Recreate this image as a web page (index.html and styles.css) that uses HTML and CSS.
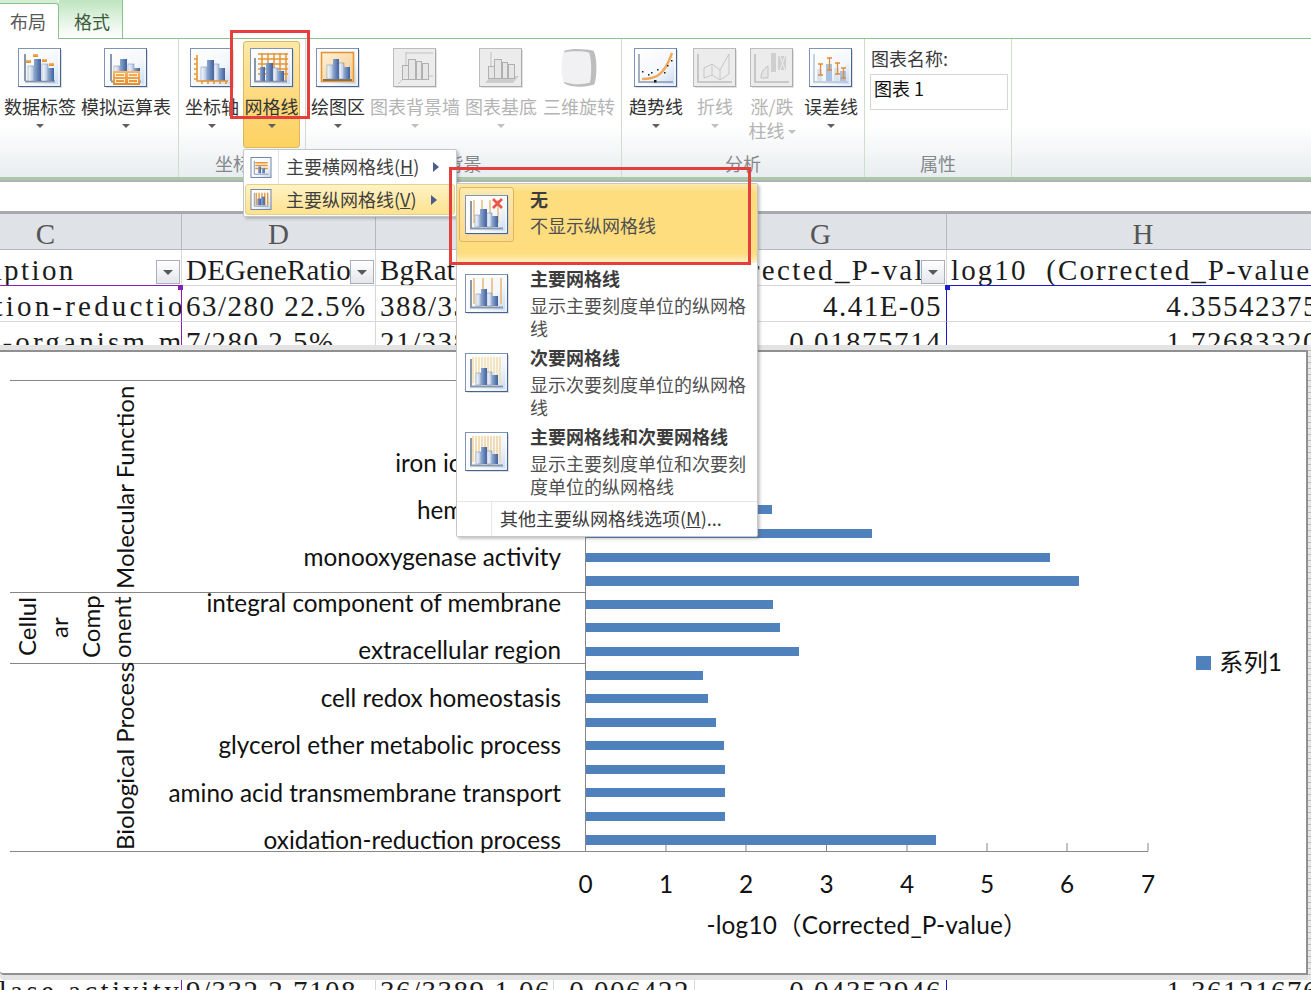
FILE: index.html
```html
<!DOCTYPE html>
<html lang="zh-CN">
<head>
<meta charset="utf-8">
<title>图表工具 布局</title>
<link rel="stylesheet" href="styles.css">
</head>
<body>
<svg class="defs" width="0" height="0" aria-hidden="true">
  <defs>
    <linearGradient id="fr" x1="0" y1="0" x2="1" y2="1"><stop offset="0" stop-color="#ffffff"/><stop offset=".6" stop-color="#f4f7fb"/><stop offset="1" stop-color="#c4d8f2"/></linearGradient>
    <linearGradient id="bd" x1="0" y1="0" x2="1" y2="0"><stop offset="0" stop-color="#8fa8cf"/><stop offset="1" stop-color="#3f5f9c"/></linearGradient>
    <linearGradient id="bl" x1="0" y1="0" x2="1" y2="0"><stop offset="0" stop-color="#ffffff"/><stop offset="1" stop-color="#a9bedd"/></linearGradient>
    <linearGradient id="og" x1="0" y1="0" x2="0" y2="1"><stop offset="0" stop-color="#f7b968"/><stop offset="1" stop-color="#e48a2a"/></linearGradient>
    <linearGradient id="pl" x1="0" y1="0" x2="1" y2="1"><stop offset="0" stop-color="#fff3dc"/><stop offset="1" stop-color="#f6c98a"/></linearGradient>
    <symbol id="frame" viewBox="0 0 44 40">
      <rect x="2" y="2" width="42" height="38" fill="#c9c9c9" opacity=".6"/>
      <rect x=".5" y=".5" width="42" height="38" fill="url(#fr)" stroke="#7f95b5"/>
      <path d="M42.5 .5V38.5H.5" fill="none" stroke="#46648f"/>
      <rect x="2" y="2" width="39" height="35" fill="none" stroke="#fff"/>
    </symbol>
    <symbol id="bars" viewBox="0 0 44 40">
      <path d="M7 33V6M7 33.500H37" stroke="#8a97aa" stroke-width="2" fill="none"/>
      <rect x="10" y="18" width="6" height="15" fill="url(#bl)" stroke="#6f86ad" stroke-width=".5"/>
      <rect x="16" y="11" width="7" height="22" fill="url(#bd)"/>
      <rect x="24" y="16" width="6" height="17" fill="url(#bl)" stroke="#6f86ad" stroke-width=".5"/>
      <rect x="30" y="20" width="6" height="13" fill="url(#bd)"/>
    </symbol>
    <symbol id="i-labels" viewBox="0 0 44 40">
      <use href="#frame" width="44" height="40"/><use href="#bars" width="44" height="40"/>
      <g fill="url(#og)"><rect x="8" y="12" width="5" height="3"/><rect x="15" y="6" width="5" height="3"/><rect x="24" y="11" width="5" height="3"/><rect x="31" y="15" width="5" height="3"/></g>
    </symbol>
    <symbol id="i-table" viewBox="0 0 44 40">
      <use href="#frame" width="44" height="40"/><use href="#bars" width="44" height="40"/>
      <rect x="9" y="23" width="27" height="14" fill="url(#og)"/>
      <g fill="none" stroke="#fff2dc"><rect x="11.500" y="25.500" width="9" height="3"/><rect x="24.500" y="25.500" width="9" height="3"/><rect x="11.500" y="31.500" width="9" height="3"/><rect x="24.500" y="31.500" width="9" height="3"/></g>
    </symbol>
    <symbol id="i-axis" viewBox="0 0 44 40">
      <use href="#frame" width="44" height="40"/>
      <rect x="11" y="19" width="6" height="14" fill="url(#bl)" stroke="#6f86ad" stroke-width=".5"/><rect x="17" y="12" width="7" height="21" fill="url(#bd)"/><rect x="24" y="16" width="5" height="17" fill="url(#bl)" stroke="#6f86ad" stroke-width=".5"/><rect x="29" y="20" width="6" height="13" fill="url(#bd)"/>
      <path d="M7 7V33H38M4 11H7M4 16H7M4 21H7M4 26H7M4 31H7M12 33V36M18 33V36M24 33V36M30 33V36M36 33V36" stroke="#e8952f" stroke-width="1.600" fill="none"/>
    </symbol>
    <symbol id="i-grid" viewBox="0 0 44 40">
      <use href="#frame" width="44" height="40"/>
      <path d="M8 6H38M8 11H38M8 16H38M8 21H38M8 26H38M12 5V33M18 5V33M24 5V33M30 5V33M36 5V33" stroke="#e8952f" stroke-width="1.500" fill="none"/>
      <path d="M5 10V33.500H37" stroke="#8a97aa" stroke-width="2" fill="none"/>
      <rect x="10" y="19" width="5" height="14" fill="url(#bd)"/><rect x="16" y="15" width="7" height="18" fill="url(#bd)"/><rect x="23" y="20" width="5" height="13" fill="url(#bl)" stroke="#6f86ad" stroke-width=".5"/><rect x="28" y="23" width="6" height="10" fill="url(#bd)"/>
    </symbol>
    <symbol id="i-plot" viewBox="0 0 44 40">
      <use href="#frame" width="44" height="40"/>
      <rect x="5.500" y="4.500" width="32" height="29" fill="url(#pl)" stroke="#e8952f" stroke-width="1.600"/>
      <rect x="11" y="17" width="6" height="14" fill="url(#bl)" stroke="#6f86ad" stroke-width=".5"/><rect x="17" y="11" width="6" height="20" fill="url(#bd)"/><rect x="23" y="15" width="5" height="16" fill="url(#bl)" stroke="#6f86ad" stroke-width=".5"/><rect x="28" y="19" width="6" height="12" fill="url(#bd)"/>
      <path d="M7 32H36" stroke="#7b7468" stroke-width="2"/>
    </symbol>
    <symbol id="g-frame" viewBox="0 0 44 40">
      <rect x="2" y="2" width="42" height="38" fill="#d6d6d6" opacity=".7"/>
      <rect x=".5" y=".5" width="42" height="38" fill="#ececed" stroke="#bdbdbd"/>
      <path d="M42.500 .5V38.500H.5" fill="none" stroke="#ababab"/>
    </symbol>
    <symbol id="i-wall" viewBox="0 0 44 40">
      <use href="#g-frame" width="44" height="40"/>
      <path d="M13 4V28L5 36M13 5H40M13 28H40" stroke="#c2c2c2" fill="none"/>
      <g fill="#e6e6e6" stroke="#b0b0b0"><rect x="9.500" y="17.500" width="6" height="14"/><rect x="15.500" y="11.500" width="7" height="20"/><rect x="23.500" y="13.500" width="5" height="18"/><rect x="29.500" y="15.500" width="6" height="16"/></g>
    </symbol>
    <symbol id="i-floor" viewBox="0 0 44 40">
      <use href="#g-frame" width="44" height="40"/>
      <path d="M12 4V28" stroke="#c2c2c2" fill="none"/>
      <path d="M12 28H40L34 35H6Z" fill="#cdcdcd"/>
      <g fill="#e6e6e6" stroke="#b0b0b0"><rect x="9.500" y="18.500" width="6" height="12"/><rect x="15.500" y="11.500" width="7" height="19"/><rect x="23.500" y="14.500" width="5" height="16"/><rect x="29.500" y="16.500" width="6" height="14"/></g>
    </symbol>
    <symbol id="i-rot" viewBox="0 0 44 44">
      <path d="M6 3C14 0 30 1 38 3C42 10 42 30 39 40C30 44 12 43 6 39C3 30 3 12 6 3Z" fill="#bdbdbd"/>
      <path d="M5 5C12 3 26 3 33 5C36 12 36 30 34 38C25 41 12 40 5 37C2 28 2 14 5 5Z" fill="#f1f0f3"/>
    </symbol>
    <symbol id="i-trend" viewBox="0 0 44 40">
      <use href="#frame" width="44" height="40"/>
      <path d="M5 6V34H39" stroke="#8a97aa" stroke-width="1.500" fill="none"/>
      <path d="M8 31C20 31 30 29 38 5" stroke="#f0a85c" stroke-width="2.400" fill="none"/>
      <g fill="#1a1a1a"><rect x="8" y="23" width="1.500" height="1.500"/><rect x="14" y="26" width="1.500" height="1.500"/><rect x="17" y="24" width="1.500" height="1.500"/><rect x="23" y="21" width="1.500" height="1.500"/><rect x="30" y="24" width="1.500" height="1.500"/><rect x="20" y="32" width="2.500" height="2.500"/><rect x="37" y="12" width="1.500" height="1.500"/><rect x="33" y="17" width="1.500" height="1.500"/></g>
    </symbol>
    <symbol id="i-lines" viewBox="0 0 44 40">
      <use href="#g-frame" width="44" height="40"/>
      <path d="M5 6V34H39" stroke="#bcbcbc" stroke-width="1.500" fill="none"/>
      <path d="M11 20L19 16L27 22L36 6M11 30L19 27L27 32L36 26M11 20V30M19 16V27M27 22V32M36 6V26" stroke="#c6c6c6" fill="none"/>
    </symbol>
    <symbol id="i-updown" viewBox="0 0 44 40">
      <use href="#g-frame" width="44" height="40"/>
      <path d="M5 6V34H39" stroke="#bcbcbc" stroke-width="1.500" fill="none"/>
      <path d="M11 30C11 22 16 20 18 18V30Z" fill="#e5e5e5" stroke="#c2c2c2"/>
      <g fill="#cfcfcf"><rect x="21" y="5" width="5" height="19"/><rect x="28" y="8" width="8" height="14"/></g>
      <path d="M30 8L35 22M35 8L30 22" stroke="#f0f0f0"/>
    </symbol>
    <symbol id="i-error" viewBox="0 0 44 40">
      <use href="#frame" width="44" height="40"/>
      <path d="M5 6V34H39" stroke="#b8c4d4" stroke-width="1.500" fill="none"/>
      <rect x="17" y="16" width="6" height="17" fill="#a9c1e0"/><rect x="8" y="21" width="5" height="12" fill="#d9e4f2"/><rect x="25" y="20" width="5" height="13" fill="#d9e4f2"/><rect x="31" y="23" width="6" height="10" fill="#a9c1e0"/>
      <path d="M9 16H14M11.500 16V27M9 27H14M18 10H23M20.500 10V22M18 22H23M26 15H31M28.500 15V26M26 26H31M32 20H37M34.500 20V30M32 30H37" stroke="#e08b35" stroke-width="1.300" fill="none"/>
    </symbol>
    <symbol id="m-none" viewBox="0 0 44 40">
      <use href="#frame" width="44" height="40"/>
      <path d="M9 5V28M17 5V28M25 5V28M33 5V28" stroke="#eab36b" stroke-width="1.300"/>
      <path d="M6 6V33.500H38" stroke="#8a97aa" stroke-width="2" fill="none"/>
      <rect x="10" y="20" width="5" height="12" fill="url(#bl)" stroke="#6f86ad" stroke-width=".5"/><rect x="15" y="14" width="7" height="18" fill="url(#bd)"/><rect x="22" y="18" width="5" height="14" fill="url(#bl)" stroke="#6f86ad" stroke-width=".5"/><rect x="27" y="21" width="6" height="11" fill="url(#bd)"/>
      <path d="M28 4L37 13M37 4L28 13" stroke="#e8574a" stroke-width="2.600"/>
    </symbol>
    <symbol id="m-major" viewBox="0 0 44 40">
      <use href="#frame" width="44" height="40"/>
      <path d="M9 4V30M18 4V30M27 4V30M36 4V30" stroke="#e8b16a" stroke-width="1.400"/>
      <path d="M6 6V33.500H38" stroke="#8a97aa" stroke-width="2" fill="none"/>
      <rect x="11" y="20" width="5" height="12" fill="url(#bl)" stroke="#6f86ad" stroke-width=".5"/><rect x="16" y="15" width="6" height="17" fill="url(#bd)"/><rect x="22" y="19" width="5" height="13" fill="url(#bl)" stroke="#6f86ad" stroke-width=".5"/><rect x="27" y="22" width="6" height="10" fill="url(#bd)"/>
    </symbol>
    <symbol id="m-minor" viewBox="0 0 44 40">
      <use href="#frame" width="44" height="40"/>
      <path d="M8 4V30M11 4V30M14 4V30M17 4V30M20 4V30M23 4V30M26 4V30M29 4V30M32 4V30M35 4V30" stroke="#f3d68f" stroke-width="1.100"/>
      <path d="M6 6V33.500H38" stroke="#8a97aa" stroke-width="2" fill="none"/>
      <rect x="11" y="20" width="5" height="12" fill="url(#bl)" stroke="#6f86ad" stroke-width=".5"/><rect x="16" y="15" width="6" height="17" fill="url(#bd)"/><rect x="22" y="19" width="5" height="13" fill="url(#bl)" stroke="#6f86ad" stroke-width=".5"/><rect x="27" y="22" width="6" height="10" fill="url(#bd)"/>
    </symbol>
    <symbol id="m-both" viewBox="0 0 44 40">
      <use href="#frame" width="44" height="40"/>
      <path d="M8 4V30M11 4V30M14 4V30M17 4V30M20 4V30M23 4V30M26 4V30M29 4V30M32 4V30M35 4V30" stroke="#f0c578" stroke-width="1.100"/>
      <path d="M6 6V33.500H38" stroke="#8a97aa" stroke-width="2" fill="none"/>
      <rect x="11" y="20" width="5" height="12" fill="url(#bl)" stroke="#6f86ad" stroke-width=".5"/><rect x="16" y="15" width="6" height="17" fill="url(#bd)"/><rect x="22" y="19" width="5" height="13" fill="url(#bl)" stroke="#6f86ad" stroke-width=".5"/><rect x="27" y="22" width="6" height="10" fill="url(#bd)"/>
    </symbol>
    <symbol id="s-h" viewBox="0 0 22 22">
      <rect x=".5" y=".5" width="21" height="21" fill="url(#fr)" stroke="#6d83a5"/>
      <path d="M5 6H18M5 9H18M5 12H18" stroke="#e8952f" stroke-width="1.600"/>
      <path d="M4 4V18H19" stroke="#8a97aa" fill="none"/>
      <rect x="8" y="10" width="3" height="7" fill="url(#bd)"/><rect x="12" y="12" width="3" height="5" fill="url(#bd)"/>
    </symbol>
    <symbol id="s-v" viewBox="0 0 22 22">
      <rect x=".5" y=".5" width="21" height="21" fill="url(#fr)" stroke="#6d83a5"/>
      <path d="M6 4V17M9 4V17M12 4V17M15 4V17M18 4V17" stroke="#e8952f" stroke-width="1.400"/>
      <path d="M4 4V18H19" stroke="#8a97aa" fill="none"/>
      <rect x="7" y="10" width="4" height="7" fill="url(#bd)"/><rect x="11" y="8" width="4" height="9" fill="url(#bd)"/>
    </symbol>
  </defs>
</svg>

<div class="app">
  <nav class="tabs">
    <span class="tab tab-on">布局</span>
    <span class="tab">格式</span>
  </nav>

  <section class="ribbon">
    <div class="group g1">
      <div class="btns">
        <div class="btn w74"><svg class="ic"><use href="#i-labels"/></svg><span class="lb">数据标签</span><i class="caret"></i></div>
        <div class="btn w92"><svg class="ic"><use href="#i-table"/></svg><span class="lb">模拟运算表</span><i class="caret"></i></div>
      </div>
      <div class="gt"></div>
    </div>
    <div class="group g2">
      <div class="btns">
        <div class="btn w58"><svg class="ic"><use href="#i-axis"/></svg><span class="lb">坐标轴</span><i class="caret"></i></div>
        <div class="btn w57 hot"><svg class="ic"><use href="#i-grid"/></svg><span class="lb">网格线</span><i class="caret"></i></div>
      </div>
      <div class="gt">坐标轴</div>
    </div>
    <div class="group g3">
      <div class="btns">
        <div class="btn w56"><svg class="ic"><use href="#i-plot"/></svg><span class="lb">绘图区</span><i class="caret"></i></div>
        <div class="btn w94 off"><svg class="ic"><use href="#i-wall"/></svg><span class="lb">图表背景墙</span><i class="caret"></i></div>
        <div class="btn w74 off"><svg class="ic"><use href="#i-floor"/></svg><span class="lb">图表基底</span><i class="caret"></i></div>
        <div class="btn w78 off"><svg class="ic"><use href="#i-rot"/></svg><span class="lb">三维旋转</span></div>
      </div>
      <div class="gt">背景</div>
    </div>
    <div class="group g4">
      <div class="btns">
        <div class="btn w62"><svg class="ic"><use href="#i-trend"/></svg><span class="lb">趋势线</span><i class="caret"></i></div>
        <div class="btn w52 off"><svg class="ic"><use href="#i-lines"/></svg><span class="lb">折线</span><i class="caret"></i></div>
        <div class="btn w58 off"><svg class="ic"><use href="#i-updown"/></svg><span class="lb">涨/跌<br>柱线<i class="caret caret-in"></i></span></div>
        <div class="btn w56"><svg class="ic"><use href="#i-error"/></svg><span class="lb">误差线</span><i class="caret"></i></div>
      </div>
      <div class="gt">分析</div>
    </div>
    <div class="group g5">
      <div class="props">
        <span class="pl">图表名称:</span>
        <span class="pi">图表 1</span>
      </div>
      <div class="gt">属性</div>
    </div>
  </section>

  <div class="fbar"></div>

  <main class="sheet">
    <div class="row head">
      <div class="c">C</div><div class="c">D</div><div class="c">E</div><div class="c">F</div><div class="c">G</div><div class="c">H</div>
    </div>
    <div class="row r0">
      <div class="c t sel-p-b">Description<b class="flt"></b></div>
      <div class="c">DEGeneRatio<b class="flt"></b></div>
      <div class="c">BgRatio<b class="flt"></b></div>
      <div class="c t">Corrected_P-value</div>
      <div class="c t n gh">Corrected_P-val<b class="flt"></b></div>
      <div class="c h sel-b-b">log10&nbsp; (Corrected_P-value)</div>
      <i class="hd hd-p"></i><i class="hd hd-b"></i>
    </div>
    <div class="row">
      <div class="c t3 sel-p-r">oxidation-reduction process</div>
      <div class="c m">63/280 22.5%</div>
      <div class="c m">388/3389 11.4%</div>
      <div class="c m n">0.000044</div>
      <div class="c m n sel-b-r">4.41E-05</div>
      <div class="c m n">4.355423755</div>
    </div>
    <div class="row">
      <div class="c t3 sel-p-r">single-organism metabolic</div>
      <div class="c m">7/280 2.5%</div>
      <div class="c m">21/3389 0.6%</div>
      <div class="c m n">0.018757</div>
      <div class="c m n sel-b-r">0.01875714</div>
      <div class="c m n">1.726833201</div>
    </div>
    <div class="gap"></div>
    <div class="row">
      <div class="c t4 sel-p-r">hydrolase activity</div>
      <div class="c m">9/332 2.7108</div>
      <div class="c m">36/3389 1.06</div>
      <div class="c m n">0.006422</div>
      <div class="c m n sel-b-r">0.04352946</div>
      <div class="c m n">1.361216767</div>
    </div>
  </main>

  <section class="chart">
    <div class="plot">
      <svg class="plot-svg" viewBox="0 352 1306 621" role="img" aria-label="柱状图">
        <g class="rule">
          <path d="M10 380.500H585M10 592.500H585M10 663.500H585M10 851.500H1148M585.500 381V851"/>
          <path d="M666 843V851M746 843V851M826.500 843V851M907 843V851M987 843V851M1067 843V851M1148 843V851"/>
        </g>
        <g class="bar">
          <rect x="586" y="505" width="186" height="9"/>
          <rect x="586" y="529" width="286" height="9"/>
          <rect x="586" y="553" width="464" height="9"/>
          <rect x="586" y="576" width="493" height="10"/>
          <rect x="586" y="600" width="187" height="9"/>
          <rect x="586" y="623" width="194" height="9"/>
          <rect x="586" y="647" width="213" height="9"/>
          <rect x="586" y="671" width="117" height="9"/>
          <rect x="586" y="694" width="122" height="9"/>
          <rect x="586" y="718" width="130" height="9"/>
          <rect x="586" y="741" width="138" height="9"/>
          <rect x="586" y="765" width="139" height="9"/>
          <rect x="586" y="788" width="139" height="9"/>
          <rect x="586" y="812" width="139" height="9"/>
          <rect x="586" y="835" width="350" height="10"/>
        </g>
        <g class="lab">
          <text x="561" y="472">iron ion binding</text>
          <text x="561" y="519">heme binding</text>
          <text x="561" y="566">monooxygenase activity</text>
          <text x="561" y="612">integral component of membrane</text>
          <text x="561" y="659">extracellular region</text>
          <text x="561" y="707">cell redox homeostasis</text>
          <text x="561" y="754">glycerol ether metabolic process</text>
          <text x="561" y="802">amino acid transmembrane transport</text>
          <text x="561" y="849">oxidation-reduction process</text>
        </g>
        <g class="vert">
          <text transform="translate(134 850) rotate(-90)">Biological Process</text>
          <text transform="translate(134 589) rotate(-90)">Molecular Function</text>
          <text transform="translate(36 656) rotate(-90)">Cellul</text>
          <text transform="translate(68 638) rotate(-90)">ar</text>
          <text transform="translate(100 658) rotate(-90)">Comp</text>
          <text transform="translate(131 658) rotate(-90)">onent</text>
        </g>
        <g class="tick">
          <text x="585.500" y="893">0</text><text x="666" y="893">1</text><text x="746" y="893">2</text><text x="826.500" y="893">3</text><text x="907" y="893">4</text><text x="987" y="893">5</text><text x="1067" y="893">6</text><text x="1148" y="893">7</text>
        </g>
        <text class="xt" x="867" y="934">-log10（Corrected_P-value）</text>
        <rect class="leg" x="1196" y="656" width="15" height="14"/>
        <text class="legt" x="1219" y="671">系列1</text>
      </svg>
    </div>
  </section>

  <div class="menu menu1">
    <div class="mi"><svg class="si"><use href="#s-h"/></svg><span class="mt">主要横网格线(<u>H</u>)</span><i class="arr"></i></div>
    <div class="mi mi-on"><svg class="si"><use href="#s-v"/></svg><span class="mt">主要纵网格线(<u>V</u>)</span><i class="arr"></i></div>
  </div>

  <div class="menu menu2">
    <div class="big big-on">
      <div class="bx"><svg class="bi"><use href="#m-none"/></svg></div>
      <div class="tx"><strong>无</strong><span>不显示纵网格线</span></div>
    </div>
    <div class="big">
      <div class="bx"><svg class="bi"><use href="#m-major"/></svg></div>
      <div class="tx"><strong>主要网格线</strong><span>显示主要刻度单位的纵网格线</span></div>
    </div>
    <div class="big">
      <div class="bx"><svg class="bi"><use href="#m-minor"/></svg></div>
      <div class="tx"><strong>次要网格线</strong><span>显示次要刻度单位的纵网格线</span></div>
    </div>
    <div class="big big-last">
      <div class="bx"><svg class="bi"><use href="#m-both"/></svg></div>
      <div class="tx"><strong>主要网格线和次要网格线</strong><span>显示主要刻度单位和次要刻度单位的纵网格线</span></div>
    </div>
    <div class="foot"><i class="gut"></i><span>其他主要纵网格线选项(<u>M</u>)...</span></div>
  </div>

  <div class="mark mark1"></div>
  <div class="mark mark2"></div>
</div>
</body>
</html>
```

FILE: styles.css
```css
* { box-sizing: border-box; }
html, body { margin: 0; padding: 0; }
body {
  width: 1311px;
  height: 990px;
  overflow: hidden;
  background: #fff;
  font-family: "Noto Sans CJK SC", "Noto Sans", sans-serif;
  font-size: 18px;
  color: #3c3c3c;
}
.defs { position: absolute; }
.app { position: relative; width: 1311px; height: 990px; overflow: hidden; }

/* tabs */
.tabs {
  display: flex;
  height: 39px;
  align-items: flex-end;
  border-bottom: 1px solid #8cc08c;
}
.tab {
  width: 64px;
  height: 38px;
  padding-left: 15px;
  line-height: 42px;
  color: #3d5a3d;
  border-right: 1px solid #8cc08c;
  background: linear-gradient(#bfe4bf, #eef8ee 70%, #fff);
}
.tab-on {
  width: 59px;
  height: 36px;
  margin-bottom: -1px;
  padding-left: 10px;
  line-height: 35px;
  color: #595959;
  background: linear-gradient(#fff, #fff);
  border-top: 1px solid #8cc08c;
  border-radius: 0 3px 0 0;
  box-shadow: 0 -3px 0 #d5ecd5;
}

/* ribbon */
.ribbon {
  display: flex;
  height: 141px;
  background: linear-gradient(#fff 62%, #e9edef);
  border-bottom: 3px solid #a9c9a9;
}
.group {
  display: flex;
  flex-direction: column;
  justify-content: space-between;
  height: 138px;
  border-right: 1px solid #cfdccf;
}
.g1 { width: 179px; }
.g2 { width: 127px; }
.g3 { width: 316px; }
.g4 { width: 243px; }
.g5 { width: 147px; }
.btns { display: flex; gap: 2px; padding-top: 2px; }
.g1 .btns { gap: 3px; padding-left: 3px; }
.g2 .btns { padding-left: 4px; }
.g3 .btns { padding-left: 4px; }
.g4 .btns { padding-left: 3px; }
.btn {
  display: flex;
  flex-direction: column;
  align-items: center;
  height: 107px;
  padding-top: 7px;
  border: 1px solid transparent;
  border-radius: 3px;
}
.w52 { width: 52px; } .w56 { width: 56px; } .w57 { width: 57px; } .w58 { width: 58px; }
.w62 { width: 62px; } .w74 { width: 74px; } .w78 { width: 78px; } .w92 { width: 92px; } .w94 { width: 94px; }
.hot {
  background: linear-gradient(#fde9a8, #fdd97c 55%, #fdd262);
  border-color: #dcb75f;
}
.ic { display: block; flex: none; width: 44px; height: 40px; margin-top: -1px; }
.lb { margin-top: 6px; line-height: 24px; white-space: nowrap; text-align: center; color: #333; }
.caret {
  display: block;
  width: 0;
  height: 0;
  margin-top: 6px;
  border: 4px solid transparent;
  border-top: 4px solid #5e5e5e;
  border-bottom: 0;
}
.caret-in { display: inline-block; margin: 0 0 3px 3px; vertical-align: middle; border-top-color: #bbb; }
.off .lb { color: #b4b4b4; }
.off .caret { border-top-color: #c0c0c0; }
.gt { height: 26px; line-height: 24px; text-align: center; color: #85888b; }
.props { display: flex; flex-direction: column; padding: 8px 0 0 6px; }
.pl { line-height: 22px; color: #3a3a3a; }
.pi {
  width: 138px;
  height: 36px;
  margin: 5px 0 0 -1px;
  padding-left: 3px;
  line-height: 27px;
  color: #111;
  background: #fff;
  border: 1px solid #d6d6d6;
}

/* blank bar */
.fbar { height: 31px; border-top: 2px solid #b0b3b3; background: #fff; }

/* sheet */
.sheet {
  width: 1311px;
  height: 779px;
  overflow: hidden;
  border-top: 3px solid #a6a9ad;
  font-family: "Liberation Serif", "Noto Sans CJK SC", serif;
  font-size: 29px;
  color: #1c1c1c;
}
.row {
  position: relative;
  display: grid;
  grid-template-columns: 272px 194px 178px 141px 252px 393px;
  width: 1430px;
  height: 36px;
  margin-left: -90px;
}
.c {
  position: relative;
  height: 36px;
  padding: 0 4px;
  overflow: hidden;
  white-space: nowrap;
  line-height: 40px;
  letter-spacing: .2px;
  border-right: 1px solid #d8d8d8;
  border-bottom: 1px solid #d8d8d8;
}
.t { letter-spacing: 2.4px; }
.t3 { letter-spacing: 3.2px; }
.t4 { padding-right: 3px; text-align: right; letter-spacing: 3.4px; }
.h { letter-spacing: 2.1px; }
.m { letter-spacing: 1.5px; }
.n { text-align: right; }
.gh { padding-right: 26px; }
.head .c, .r0 .c { line-height: 41px; }
.head .c {
  text-align: center;
  color: #555;
  background: #dfe2e6;
  border-right-color: #b5b8bc;
  border-bottom-color: #b5b8bc;
}
.sel-p-r { border-right-color: #8a1fb3; }
.sel-p-b { border-bottom-color: #8a1fb3; }
.sel-b-r { border-right-color: #1b1bd0; }
.sel-b-b { border-bottom-color: #1b1bd0; }
.hd {
  position: absolute;
  z-index: 2;
  bottom: -4px;
  width: 5px;
  height: 5px;
}
.hd-p { left: 268px; background: #8a1fb3; }
.hd-b { left: 1035px; background: #1b1bd0; }
.flt {
  position: absolute;
  right: 1px;
  bottom: 1px;
  display: block;
  width: 24px;
  height: 24px;
  background: linear-gradient(#fff, #e3e6ec);
  border: 1px solid #acb0b6;
}
.flt::after {
  content: "";
  position: absolute;
  left: 6px;
  top: 9px;
  border: 5px solid transparent;
  border-top: 5px solid #595959;
  border-bottom: 0;
}
.gap { height: 613px; }

/* chart */
.chart {
  position: absolute;
  left: 0;
  top: 345px;
  width: 1311px;
  height: 635px;
  padding: 5px 3px 5px 0;
  background:
    repeating-linear-gradient(#e8e8e8 0 5px, #b9bdc1 5px 6px) right top / 3px 100% no-repeat,
    #e3e3e3;
  border-radius: 0 0 0 4px;
}
.plot {
  height: 100%;
  background: #fff;
  border: 2px solid #8f9090;
  border-left: 0;
  border-radius: 0 0 0 4px;
}
.plot-svg { display: block; width: 100%; height: 100%; }
.rule path { fill: none; stroke: #868686; stroke-width: 1; }
.bar rect, .leg { fill: #4f81bd; }
.plot-svg text { font-family: "Lato", "Noto Sans CJK SC", sans-serif; fill: #111; }
.lab text { font-size: 24.3px; text-anchor: end; }
.vert text { font-size: 24px; }
.tick text { font-size: 24.4px; text-anchor: middle; }
.plot-svg .xt { font-size: 24.4px; letter-spacing: .2px; text-anchor: middle; }
.plot-svg .legt { font-size: 24.4px; }

/* menus */
.menu {
  position: absolute;
  background: #fff;
  border: 1px solid #c3c6cb;
  border-radius: 2px;
  box-shadow: 2px 2px 3px rgba(90, 90, 90, .35);
}
.menu1 { left: 243px; top: 149px; width: 214px; height: 68px; padding: 0 1px; }
.mi { position: relative; display: flex; align-items: center; height: 34px; padding-left: 5px; }
.mi::before {
  content: "";
  position: absolute;
  left: 33px;
  top: 0;
  bottom: 0;
  border-left: 1px solid #e3e3e3;
}
.mi-on {
  height: 31px;
  background: linear-gradient(#fff3c4, #fde28e);
  border: 1px solid #e7cf8c;
  border-radius: 3px;
  padding-left: 4px;
}
.mi-on::before { display: none; }
.si { display: block; flex: none; width: 22px; height: 21px; }
.mt { margin-left: 14px; margin-top: -2px; white-space: nowrap; color: #3f3f3f; }
.arr {
  margin-left: 14px;
  border: 5px solid transparent;
  border-left: 6px solid #4a5d8c;
  border-right: 0;
}
.menu2 { left: 456px; top: 183px; width: 302px; height: 354px; }
.big { display: flex; height: 79px; padding-right: 6px; }
.big-on {
  height: 79px;
  margin-bottom: 3px;
  padding-top: 3px;
  background: linear-gradient(#fbe9a9, #fedd7f 10%, #fedd7f 88%, #fff2c8);
  border-radius: 2px;
}
.big-last { height: 77px; }
.bx {
  flex: none;
  width: 55px;
  height: 55px;
  margin-left: 2px;
  padding: 7px 0 0 5px;
  border: 1px solid transparent;
  border-radius: 3px;
}
.big-on .bx { background: linear-gradient(#fde9ae, #fdd98a); border-color: #e2b45f; }
.bi { display: block; width: 44px; height: 40px; }
.tx { display: flex; flex-direction: column; margin: -1px 0 0 16px; color: #4f4f4f; }
.tx strong { line-height: 26px; font-weight: 700; color: #3c3c3c; }
.tx span { margin-top: 3px; line-height: 23px; width: 230px; }
.big-on .tx span { margin-top: 2px; }
.foot { display: flex; align-items: center; height: 35px; border-top: 1px solid #e6e6e6; }
.gut { width: 35px; height: 100%; margin-right: 8px; border-right: 1px solid #e6e6e6; }
.foot span { margin-top: -2px; white-space: nowrap; }

/* annotation boxes */
.mark { position: absolute; border: 3px solid #e63d3d; }
.mark1 { left: 230px; top: 30px; width: 80px; height: 89px; }
.mark2 { left: 449px; top: 167px; width: 302px; height: 98px; }
```
